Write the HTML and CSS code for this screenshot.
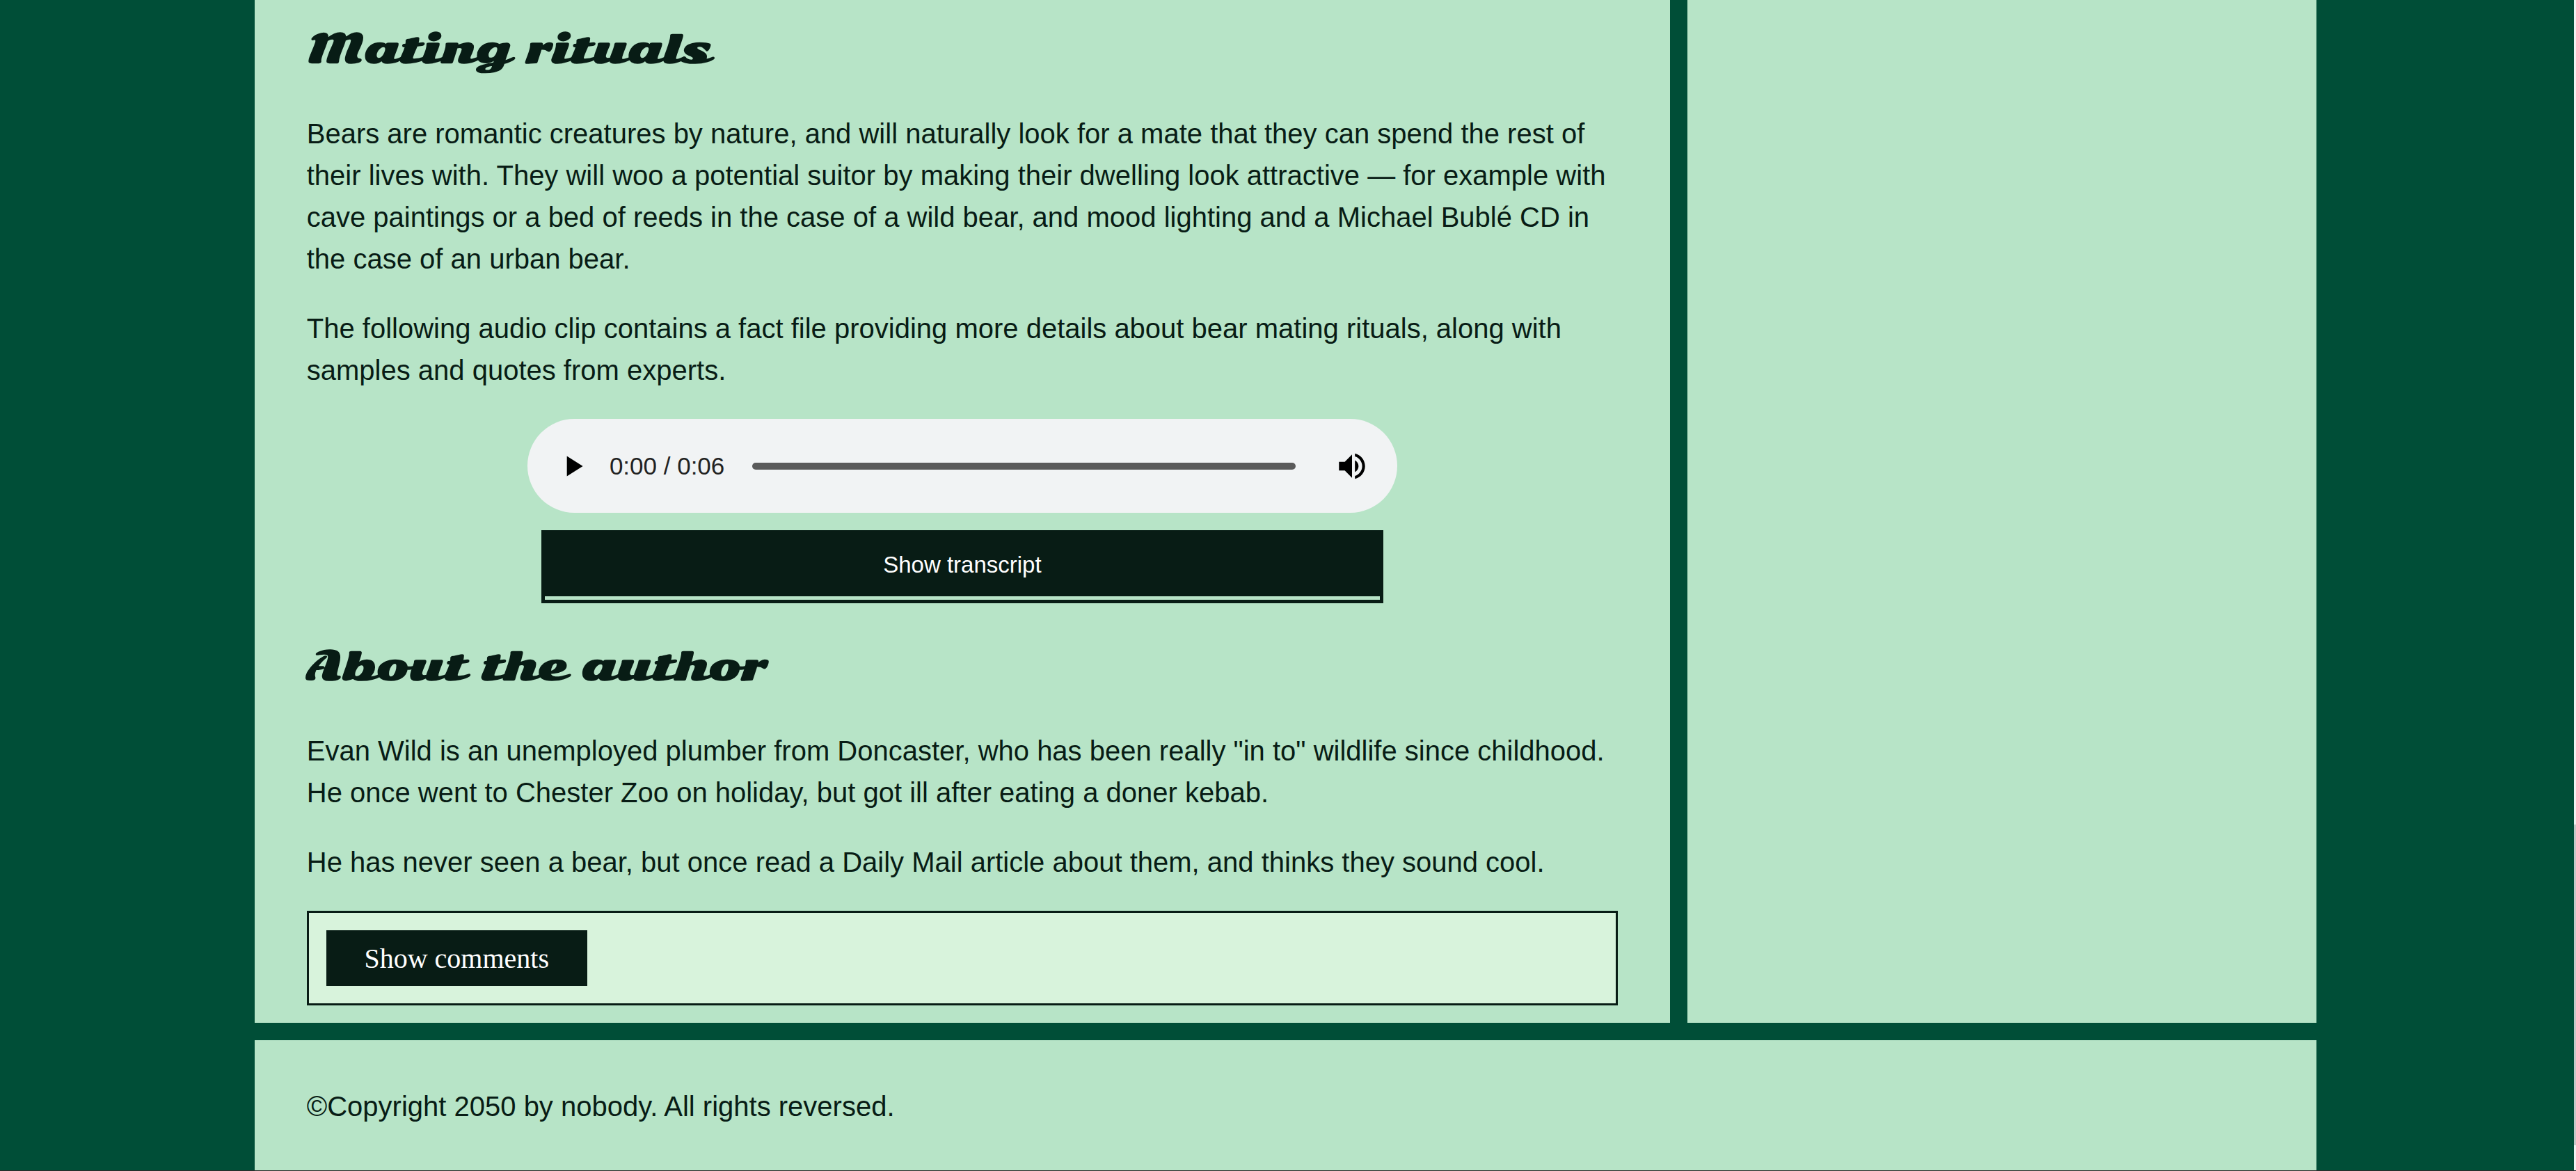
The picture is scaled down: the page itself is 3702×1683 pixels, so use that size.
FILE: index.html
```html
<!DOCTYPE html>
<html lang="en">
<head>
  <meta charset="utf-8">
  <title>The trouble with bears</title>
  <link rel="stylesheet" href="styles.css">
</head>
<body>
  <div class="page">
    <main class="panel article">
      <h2>Mating rituals</h2>
      <p>Bears are romantic creatures by nature, and will naturally look for a mate that they can spend the rest of their lives with. They will woo a potential suitor by making their dwelling look attractive — for example with cave paintings or a bed of reeds in the case of a wild bear, and mood lighting and a Michael Bublé CD in the case of an urban bear.</p>
      <p>The following audio clip contains a fact file providing more details about bear mating rituals, along with samples and quotes from experts.</p>

      <div class="player" role="group" aria-label="Audio player">
        <button class="icon-button" type="button" aria-label="Play">
          <svg viewBox="0 0 24 24" aria-hidden="true"><path d="M8 5v14l11-7z"/></svg>
        </button>
        <span class="time">0:00 / 0:06</span>
        <input class="seek" type="range" min="0" max="6" value="0" aria-label="Seek">
        <button class="icon-button" type="button" aria-label="Mute">
          <svg viewBox="0 0 24 24" aria-hidden="true"><path d="M3 9v6h4l5 5V4L7 9H3zm13.500 3c0-1.770-1.020-3.290-2.500-4.030v8.050c1.480-.730 2.500-2.250 2.500-4.020zM14 3.230v2.060c2.890.860 5 3.540 5 6.710s-2.110 5.850-5 6.710v2.060c4.010-.910 7-4.490 7-8.770s-2.990-7.860-7-8.770z"/></svg>
        </button>
      </div>

      <div class="transcript">
        <button class="transcript-toggle" type="button">Show transcript</button>
      </div>

      <h2>About the author</h2>
      <p>Evan Wild is an unemployed plumber from Doncaster, who has been really "in to" wildlife since childhood. He once went to Chester Zoo on holiday, but got ill after eating a doner kebab.</p>
      <p>He has never seen a bear, but once read a Daily Mail article about them, and thinks they sound cool.</p>

      <section class="comments" aria-label="Comments">
        <button class="comments-toggle" type="button">Show comments</button>
      </section>
    </main>

    <aside class="panel"></aside>

    <footer class="panel footer">
      <p>©Copyright 2050 by nobody. All rights reversed.</p>
    </footer>
  </div>
  <div class="scrollbar" aria-hidden="true"><div class="scrollbar-thumb"></div></div>
  <div class="window-edge" aria-hidden="true"></div>
</body>
</html>
```

FILE: styles.css
```css
:root {
  --ink: #081c15;
  --panel: #b7e4c7;
  --panel-light: #d8f3dc;
  --page: #004e37;
}

* {
  box-sizing: border-box;
}

html {
  overflow: hidden;
}

body {
  min-height: 100vh;
  margin: 0;
  background: var(--page);
  color: var(--ink);
  font-family: "Liberation Sans", Arial, sans-serif;
  font-size: 40px;
  line-height: 60px;
}

.page {
  display: grid;
  grid-template-columns: 9fr 4fr;
  gap: 25px;
  width: 80.05%;
  margin-left: 9.88%;
}

.panel {
  background: var(--panel);
  padding: 25px 75px;
}

h2 {
  margin: 45px 0 46px;
  font-family: "Sonsie One", "DejaVu Serif", serif;
  font-size: 55px;
  font-weight: bold;
  line-height: 91px;
}

.article h2:first-child {
  margin-top: 0;
}

p {
  margin: 40px 0;
}

/* Audio player */
.player {
  display: flex;
  align-items: center;
  width: 1250px;
  max-width: 100%;
  height: 135px;
  margin: 0 auto 25px;
  padding: 0 40px;
  border-radius: 68px;
  background: #f1f3f4;
}

.icon-button {
  flex: none;
  width: 50px;
  height: 50px;
  padding: 0;
  border: 0;
  background: none;
}

.icon-button svg {
  display: block;
  width: 100%;
  height: 100%;
  fill: #000;
}

.time {
  margin-left: 28px;
  color: #222;
  font-size: 35px;
  white-space: nowrap;
}

.seek {
  flex: 1;
  min-width: 0;
  height: 10px;
  margin: 0 56px 0 40px;
  border-radius: 5px;
  background: #5a5a5a;
  appearance: none;
}

.seek::-webkit-slider-thumb {
  width: 1px;
  height: 1px;
  appearance: none;
}

/* Transcript */
.transcript {
  width: 1210px;
  max-width: 100%;
  margin: 0 auto;
  padding-bottom: 5px;
  border: 5px solid var(--ink);
}

.transcript-toggle {
  display: block;
  width: 100%;
  height: 90px;
  border: 0;
  background: var(--ink);
  color: #fff;
  font-family: inherit;
  font-size: 33px;
}

/* Comments */
.comments {
  padding: 25px;
  border: 3px solid var(--ink);
  background: var(--panel-light);
}

.comments-toggle {
  display: block;
  width: 375px;
  height: 80px;
  border: 0;
  background: var(--ink);
  color: #fff;
  font-family: "Liberation Serif", "Times New Roman", serif;
  font-size: 40px;
}

.footer {
  grid-column: 1 / -1;
}

/* Window frame */
.scrollbar {
  position: fixed;
  inset: 0 0 0 auto;
  display: flex;
  align-items: flex-end;
  width: 3px;
  padding-bottom: 37px;
  background: #f1f1f1;
}

.scrollbar-thumb {
  width: 100%;
  height: 28%;
  background: #c8c8c8;
}

.window-edge {
  position: fixed;
  inset: auto 0 0 0;
  height: 1px;
  background: #2b2b2b;
}
```
